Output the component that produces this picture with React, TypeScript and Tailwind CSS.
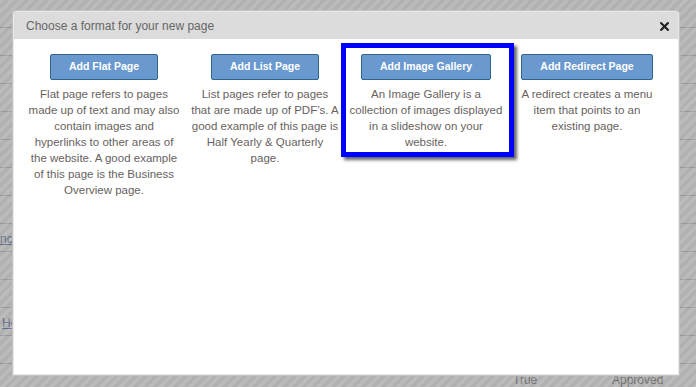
import React from "react";

const font = { fontFamily: '"Liberation Sans", Arial, sans-serif' };

type Col = { label: string; w: string; lines: string[] };

const cols: Col[] = [
  {
    label: "Add Flat Page",
    w: "w-[108px]",
    lines: [
      "Flat page refers to pages",
      "made up of text and may also",
      "contain images and",
      "hyperlinks to other areas of",
      "the website. A good example",
      "of this page is the Business",
      "Overview page.",
    ],
  },
  {
    label: "Add List Page",
    w: "w-[108px]",
    lines: [
      "List pages refer to pages",
      "that are made up of PDF\u2019s. A",
      "good example of this page is",
      "Half Yearly & Quarterly",
      "page.",
    ],
  },
  {
    label: "Add Image Gallery",
    w: "w-[130px]",
    lines: [
      "An Image Gallery is a",
      "collection of images displayed",
      "in a slideshow on your",
      "website.",
    ],
  },
  {
    label: "Add Redirect Page",
    w: "w-[132px]",
    lines: ["A redirect creates a menu", "item that points to an", "existing page."],
  },
];

const rows = Array.from({ length: 14 });

export default function App() {
  return (
    <div
      className="relative w-[696px] h-[387px] overflow-hidden bg-[#b1b1b1]"
      style={font}
    >
      {/* page behind the overlay */}
      <div className="flex flex-col">
        {rows.map((_, i) => (
          <div
            key={i}
            className="relative h-[28px] shrink-0 border-b border-[#979797] text-[12px] text-[#6e6e6e]"
          >
            {i === 8 && (
              <span className="absolute left-[0px] top-[6px] underline text-[#5d6b86]">
                nce
              </span>
            )}
            {i === 11 && (
              <span className="absolute left-[2px] top-[6px] underline text-[#5d6b86]">
                He
              </span>
            )}
            {i === 13 && (
              <>
                <span className="absolute left-[513px] top-[7px]">True</span>
                <span className="absolute left-[612px] top-[7px]">Approved</span>
              </>
            )}
          </div>
        ))}
      </div>

      {/* striped overlay */}
      <div className="absolute inset-0 bg-[repeating-linear-gradient(135deg,rgba(255,255,255,0.13)_0px,rgba(255,255,255,0.13)_3.5px,rgba(0,0,0,0)_3.5px,rgba(0,0,0,0)_7px)]" />

      {/* dialog */}
      <div className="absolute left-[12px] top-[10px] w-[668px] h-[366px] rounded-t-[4px] border border-[#c2c2c2] bg-[#e9e9e9] p-[1px]">
        <div className="flex h-full flex-col bg-white">
          <div className="flex h-[27px] shrink-0 items-center justify-between bg-[#dcdcdc] pl-[12px] pr-[9px]">
            <span className="text-[12px] text-[#666666]">
              Choose a format for your new page
            </span>
            <svg width="9" height="9" viewBox="0 0 9 9" className="mt-[1px]">
              <path
                d="M1.2 1.2 L7.8 7.8 M7.8 1.2 L1.2 7.8"
                stroke="#222"
                strokeWidth="2.2"
                strokeLinecap="square"
              />
            </svg>
          </div>
          <div className="grid grid-cols-[150px_150px_150px_150px] gap-x-[11px] pl-[15px] pt-[15px]">
            {cols.map((c) => (
              <div key={c.label} className="flex flex-col items-center">
                <button
                  className={`${c.w} h-[26px] rounded-[2px] border border-[#2f6688] bg-[#6a99cf] text-[10.5px] font-bold text-white`}
                >
                  {c.label}
                </button>
                <p className="mt-[6px] text-center text-[11.5px] leading-[16px] text-[#676260] whitespace-nowrap">
                  {c.lines.map((l, i) => (
                    <React.Fragment key={i}>
                      {l}
                      {i < c.lines.length - 1 && <br />}
                    </React.Fragment>
                  ))}
                </p>
              </div>
            ))}
          </div>
        </div>
      </div>

      {/* highlight annotation */}
      <div className="absolute left-[341px] top-[43px] w-[173px] h-[114px] border-[5px] border-[#0000ff] shadow-[3px_3px_3px_rgba(0,0,0,0.6)]" />
    </div>
  );
}
